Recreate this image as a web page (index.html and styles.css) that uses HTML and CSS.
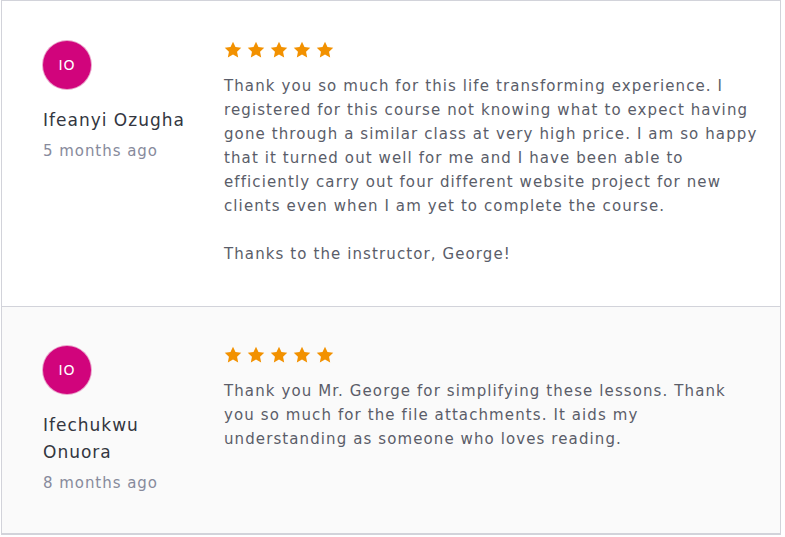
FILE: index.html
```html
<!DOCTYPE html>
<html>
<head>
<meta charset="utf-8">
<link rel="stylesheet" href="styles.css">
</head>
<body>
<div class="reviews">
  <div class="review">
    <div class="author">
      <div class="avatar">IO</div>
      <div class="name">Ifeanyi Ozugha</div>
      <div class="time">5 months ago</div>
    </div>
    <div class="content">
      <div class="stars">
        <svg viewBox="0 0 24 24"><path d="M12 1l3.3 7 7.7 1-5.6 5.3 1.5 7.6L12 18.1l-6.9 3.8 1.5-7.6L1 9l7.7-1z"/></svg>
        <svg viewBox="0 0 24 24"><path d="M12 1l3.3 7 7.7 1-5.6 5.3 1.5 7.6L12 18.1l-6.9 3.8 1.5-7.6L1 9l7.7-1z"/></svg>
        <svg viewBox="0 0 24 24"><path d="M12 1l3.3 7 7.7 1-5.6 5.3 1.5 7.6L12 18.1l-6.9 3.8 1.5-7.6L1 9l7.7-1z"/></svg>
        <svg viewBox="0 0 24 24"><path d="M12 1l3.3 7 7.7 1-5.6 5.3 1.5 7.6L12 18.1l-6.9 3.8 1.5-7.6L1 9l7.7-1z"/></svg>
        <svg viewBox="0 0 24 24"><path d="M12 1l3.3 7 7.7 1-5.6 5.3 1.5 7.6L12 18.1l-6.9 3.8 1.5-7.6L1 9l7.7-1z"/></svg>
      </div>
      <p class="text">Thank you so much for this life transforming experience. I registered for this course not knowing what to expect having gone through a similar class at very high price. I am so happy that it turned out well for me and I have been able to efficiently carry out four different website project for new clients even when I am yet to complete the course.</p>
      <p class="text">Thanks to the instructor, George!</p>
    </div>
  </div>
  <div class="review alt">
    <div class="author">
      <div class="avatar">IO</div>
      <div class="name">Ifechukwu Onuora</div>
      <div class="time">8 months ago</div>
    </div>
    <div class="content">
      <div class="stars">
        <svg viewBox="0 0 24 24"><path d="M12 1l3.3 7 7.7 1-5.6 5.3 1.5 7.6L12 18.1l-6.9 3.8 1.5-7.6L1 9l7.7-1z"/></svg>
        <svg viewBox="0 0 24 24"><path d="M12 1l3.3 7 7.7 1-5.6 5.3 1.5 7.6L12 18.1l-6.9 3.8 1.5-7.6L1 9l7.7-1z"/></svg>
        <svg viewBox="0 0 24 24"><path d="M12 1l3.3 7 7.7 1-5.6 5.3 1.5 7.6L12 18.1l-6.9 3.8 1.5-7.6L1 9l7.7-1z"/></svg>
        <svg viewBox="0 0 24 24"><path d="M12 1l3.3 7 7.7 1-5.6 5.3 1.5 7.6L12 18.1l-6.9 3.8 1.5-7.6L1 9l7.7-1z"/></svg>
        <svg viewBox="0 0 24 24"><path d="M12 1l3.3 7 7.7 1-5.6 5.3 1.5 7.6L12 18.1l-6.9 3.8 1.5-7.6L1 9l7.7-1z"/></svg>
      </div>
      <p class="text">Thank you Mr. George for simplifying these lessons. Thank you so much for the file attachments. It aids my understanding as someone who loves reading.</p>
    </div>
  </div>
</div>
</body>
</html>
```
FILE: styles.css
```css
html, body {
  margin: 0;
  padding: 0;
  background: #ffffff;
}
body {
  font-family: "DejaVu Sans", "Open Sans", sans-serif;
}
.reviews {
  margin-left: 1px;
  width: 780px;
  border: 1px solid #d2d3da;
  box-sizing: border-box;
}
.review {
  display: flex;
  padding: 40px 0 40px 41px;
  border-bottom: 1px solid #d2d3da;
}
.review.alt {
  background: #fafafa;
  padding-top: 39px;
  padding-bottom: 38px;
}
.author {
  width: 181px;
  flex-shrink: 0;
  padding-right: 30px;
  box-sizing: border-box;
}
.avatar {
  width: 48px;
  height: 48px;
  border-radius: 50%;
  background: #d1047c;
  box-shadow: 0 0 0 1px #e9a6cb;
  color: #fff;
  font-size: 14px;
  letter-spacing: 1px;
  display: flex;
  align-items: center;
  justify-content: center;
  margin-bottom: 18px;
}
.name {
  font-size: 17px;
  line-height: 27px;
  color: #333640;
  letter-spacing: 1px;
}
.time {
  margin-top: 5px;
  font-size: 15px;
  line-height: 24px;
  color: #878a9c;
  letter-spacing: 0.95px;
}
.content {
  width: 536px;
}
.stars {
  display: flex;
  gap: 5px;
  height: 18px;
  margin-bottom: 15px;
}
.stars svg {
  width: 18px;
  height: 18px;
  fill: #f29100;
}
.text {
  margin: 0 0 24px;
  font-size: 15px;
  line-height: 24px;
  color: #5a5d69;
  letter-spacing: 1.1px;
}
.text:last-child {
  margin-bottom: 0;
}
```
